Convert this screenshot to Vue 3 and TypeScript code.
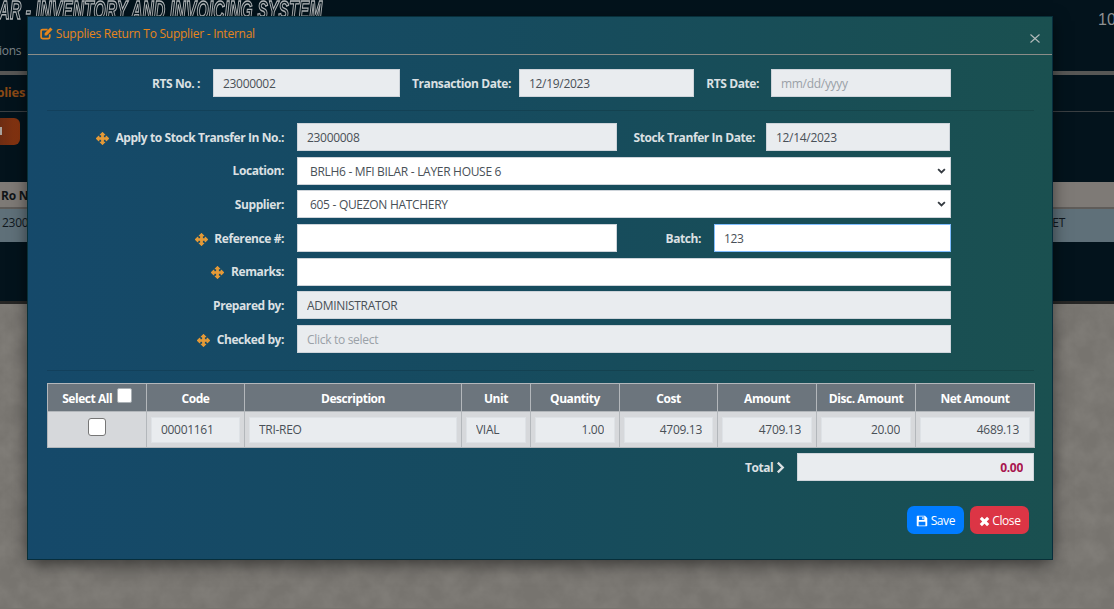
<template>
  <div class="page">
    <!-- dimmed page behind the modal -->
    <div class="backdrop">
      <header class="topbar">
        <div class="brand-wrap">
          <div class="brand">MFI BILAR - INVENTORY AND INVOICING SYSTEM</div>
          <div class="nav-text">Transactions</div>
        </div>
        <div class="top-right">10</div>
      </header>
      <div class="panel">
        <div class="panel-title">Supplies</div>
        <div class="panel-tools"><span class="add-btn"><i></i></span></div>
        <div class="bg-head"><span>Ro No</span></div>
        <div class="bg-row"><span>23000002</span><span class="bg-end">ET</span></div>
      </div>
      <div class="wall">
        <svg class="wall-tex" width="1114" height="304" aria-hidden="true">
          <filter id="grain">
            <feTurbulence type="fractalNoise" baseFrequency="0.05" numOctaves="4" seed="7" />
            <feColorMatrix type="matrix" values="0 0 0 0 0.62  0 0 0 0 0.6  0 0 0 0 0.56  0.2 0 0 0 -0.06" />
          </filter>
          <rect width="1114" height="304" filter="url(#grain)" />
        </svg>
      </div>
    </div>

    <section class="modal">
      <div class="modal-head">
        <h5 class="modal-title">
          <svg class="ico-edit" viewBox="0 0 24 24" width="13" height="13">
            <path d="M18 13.500v5a3 3 0 0 1-3 3H5a3 3 0 0 1-3-3V8a3 3 0 0 1 3-3h9" fill="none" stroke="currentColor" stroke-width="3.2" />
            <path d="M8.500 11.500 19.200.8l4 4L12.500 15.500h-4z" fill="currentColor" />
          </svg>
          Supplies Return To Supplier - Internal
        </h5>
        <button class="x-btn" type="button">
          <svg viewBox="0 0 10 9" width="10" height="9"><path d="M.5.5l9 8M9.500.5l-9 8" /></svg>
        </button>
      </div>

      <div class="modal-body">
        <div class="top-row">
          <label class="lbl rts-l">RTS No. :</label>
          <input class="ctl rts-i" readonly value="23000002" />
          <label class="lbl tx-l">Transaction Date:</label>
          <input class="ctl tx-i" readonly value="12/19/2023" />
          <label class="lbl dt-l">RTS Date:</label>
          <input class="ctl dt-i" readonly placeholder="mm/dd/yyyy" />
        </div>

        <hr class="sep" />

        <div class="form">
          <div class="row">
            <label class="lbl main-l">
              <svg class="ico-move" viewBox="0 0 24 24"><path :d="movePath" /></svg>
              Apply to Stock Transfer In No.:
            </label>
            <input class="ctl half" readonly value="23000008" />
            <label class="lbl stock-l">Stock Tranfer In Date:</label>
            <input class="ctl stock-i" readonly value="12/14/2023" />
          </div>
          <div class="row">
            <label class="lbl main-l">Location:</label>
            <div class="sel-wrap">
              <select class="ctl sel">
                <option>BRLH6 - MFI BILAR - LAYER HOUSE 6</option>
              </select>
              <svg class="sel-arrow" viewBox="0 0 12 8"><path d="M1.500 1.500 6 6l4.500-4.500" /></svg>
            </div>
          </div>
          <div class="row">
            <label class="lbl main-l">Supplier:</label>
            <div class="sel-wrap">
              <select class="ctl sel">
                <option>605 - QUEZON HATCHERY</option>
              </select>
              <svg class="sel-arrow" viewBox="0 0 12 8"><path d="M1.500 1.500 6 6l4.500-4.500" /></svg>
            </div>
          </div>
          <div class="row">
            <label class="lbl main-l">
              <svg class="ico-move" viewBox="0 0 24 24"><path :d="movePath" /></svg>
              Reference #:
            </label>
            <input class="ctl half white" />
            <label class="lbl batch-l">Batch:</label>
            <input class="ctl batch-i" value="123" />
          </div>
          <div class="row">
            <label class="lbl main-l">
              <svg class="ico-move" viewBox="0 0 24 24"><path :d="movePath" /></svg>
              Remarks:
            </label>
            <input class="ctl full white" />
          </div>
          <div class="row">
            <label class="lbl main-l">Prepared by:</label>
            <input class="ctl full" readonly value="ADMINISTRATOR" />
          </div>
          <div class="row">
            <label class="lbl main-l">
              <svg class="ico-move" viewBox="0 0 24 24"><path :d="movePath" /></svg>
              Checked by:
            </label>
            <input class="ctl full" readonly placeholder="Click to select" />
          </div>
        </div>

        <hr class="sep sep2" />

        <table class="items">
          <colgroup>
            <col v-for="w in colWidths" :key="w.key" :style="{ width: w.px + 'px' }" />
          </colgroup>
          <thead>
            <tr>
              <th class="sel-all">Select All <input type="checkbox" class="chk chk-sm" /></th>
              <th v-for="h in headers" :key="h">{{ h }}</th>
            </tr>
          </thead>
          <tbody>
            <tr>
              <td class="chk-cell"><input type="checkbox" class="chk" /></td>
              <td><input class="ctl cell" readonly value="00001161" /></td>
              <td><input class="ctl cell" readonly value="TRI-REO" /></td>
              <td><input class="ctl cell" readonly value="VIAL" /></td>
              <td v-for="(n, i) in numbers" :key="i"><input class="ctl cell num" readonly :value="n" /></td>
            </tr>
          </tbody>
        </table>

        <div class="total-row">
          <span class="total-l">
            Total
            <svg viewBox="0 0 10 14" width="9" height="13"><path d="M2 1.500 7.500 7 2 12.500" /></svg>
          </span>
          <input class="ctl total-i" readonly value="0.00" />
        </div>

        <div class="actions">
          <button class="btn save" type="button">
            <svg viewBox="0 0 16 16" width="12" height="12">
              <path fill-rule="evenodd" d="M2 1h10l3 3v10a1 1 0 0 1-1 1H2a1 1 0 0 1-1-1V2a1 1 0 0 1 1-1zm2 1v4.500h7V2zm4.500.6h1.600v3.200H8.500zM3.500 9v5h9V9z" fill="currentColor" />
            </svg>
            Save
          </button>
          <button class="btn close" type="button">
            <svg viewBox="0 0 12 12" width="11" height="11"><path d="M2 2l8 8M10 2l-8 8" /></svg>
            Close
          </button>
        </div>
      </div>
    </section>
  </div>
</template>

<script setup lang="ts">
const movePath =
  'M12 1l4.200 4.200h-2.700v5.300h5.300V7.800L23 12l-4.200 4.200v-2.700h-5.300v5.300h2.700L12 23l-4.200-4.200h2.700v-5.300H5.200v2.700L1 12l4.200-4.200v2.700h5.300V5.200H7.800z'

const headers: string[] = ['Code', 'Description', 'Unit', 'Quantity', 'Cost', 'Amount', 'Disc. Amount', 'Net Amount']
const numbers: string[] = ['1.00', '4709.13', '4709.13', '20.00', '4689.13']
const colWidths = [99, 98, 217, 69, 89, 98, 99, 99, 119].map((px, key) => ({ px, key }))
</script>

<style scoped>
.page {
  position: relative;
  width: 1114px;
  height: 609px;
  overflow: hidden;
  font-family: "Open Sans", "Noto Sans", sans-serif;
  font-size: 12px;
  letter-spacing: -0.25px;
}

/* background page */
.backdrop {
  height: 609px;
  display: flex;
  flex-direction: column;
  background: #77746f;
}

.topbar {
  height: 71px;
  flex: none;
  display: flex;
  justify-content: space-between;
  background: #03131c;
  border-bottom: 4px solid #575755;
  box-sizing: content-box;
  overflow: hidden;
}

.brand-wrap {
  white-space: nowrap;
}

.brand {
  height: 43px;
  margin-top: -4px;
  margin-left: -59px;
  font-family: "Liberation Sans", sans-serif;
  font-size: 25px;
  font-weight: 700;
  font-style: italic;
  letter-spacing: 0.35px;
  color: #0a1a22;
  -webkit-text-stroke: 1.4px #b4b8ba;
  transform: scaleX(0.62);
  transform-origin: 0 0;
}

.nav-text {
  margin-left: -47px;
  margin-top: 3px;
  color: #7e8589;
  font-size: 12px;
}

.top-right {
  width: 16px;
  padding-top: 11px;
  font-family: "Liberation Sans", sans-serif;
  font-size: 16px;
  letter-spacing: 0;
  color: #8d9092;
  white-space: nowrap;
}

.panel {
  height: 229px;
  flex: none;
  display: flex;
  flex-direction: column;
  background: #03131c;
  border-bottom: 3px solid #262625;
  box-sizing: border-box;
  overflow: hidden;
}

.panel-title {
  height: 36px;
  flex: none;
  margin: 0 -27px;
  line-height: 35px;
  font-size: 13px;
  font-weight: 700;
  color: #8a4a16;
  border-bottom: 1px solid #3a3f42;
}

.panel-tools {
  height: 70px;
  flex: none;
  padding-top: 6px;
  box-sizing: border-box;
}

.add-btn {
  display: block;
  width: 20px;
  height: 27px;
  background: linear-gradient(90deg, #6d2c12, #8a3510);
  border-radius: 0 6px 6px 0;
  position: relative;
}

.add-btn i {
  position: absolute;
  left: 0;
  top: 9px;
  width: 2px;
  height: 8px;
  background: #a9a29c;
}

.bg-head {
  height: 27px;
  flex: none;
  box-sizing: border-box;
  background: #7e7a76;
  border-bottom: 2px solid #5f5c59;
  padding-left: 1px;
  line-height: 27px;
  font-weight: 700;
  color: #101518;
  white-space: nowrap;
}

.bg-row {
  height: 33px;
  flex: none;
  display: flex;
  justify-content: space-between;
  background: #5f7079;
  padding: 0 49px 0 2px;
  line-height: 27px;
  color: #10181e;
}

.wall {
  flex: 1;
  overflow: hidden;
}

.wall-tex {
  display: block;
}

/* modal */
.modal {
  position: absolute;
  left: 27px;
  top: 16px;
  width: 1026px;
  height: 544px;
  box-sizing: border-box;
  border: 1px solid rgba(4, 40, 50, 0.8);
  background: linear-gradient(90deg, #15496a 0%, #164b5f 45%, #1a5050 100%);
  box-shadow: 0 5px 15px rgba(0, 0, 0, 0.5);
}

.modal-head {
  height: 38px;
  box-sizing: border-box;
  display: flex;
  justify-content: space-between;
  border-bottom: 1px solid #8c8d88;
  padding: 0 12px;
}

.modal-title {
  margin: 0;
  font-size: 12px;
  font-weight: 400;
  line-height: 33px;
  color: #e8851a;
}

.ico-edit {
  vertical-align: -2px;
}

.x-btn {
  border: 0;
  padding: 12px 0 0;
  height: 30px;
  background: none;
}

.x-btn svg {
  display: block;
  fill: none;
  stroke: #b5bcbc;
  stroke-width: 1.1;
}

.modal-body {
  padding: 14px 18px 0 19px;
}

.lbl {
  flex: none;
  font-weight: 700;
  letter-spacing: -0.42px;
  color: #dbe0e3;
  text-align: right;
  white-space: nowrap;
}

.ctl {
  box-sizing: border-box;
  height: 28px;
  border: 1px solid #ced4da;
  border-radius: 0;
  outline: 0;
  padding: 0 9px;
  background: #e9ecef;
  color: #495057;
  font: inherit;
  letter-spacing: -0.3px;
}

.ctl::placeholder {
  color: #9aa1a7;
}

.white {
  background: #fff;
}

.top-row {
  display: flex;
  align-items: center;
}

.rts-l { width: 153px; margin-right: 13px; }
.rts-i { width: 187px; margin-right: 12px; }
.tx-l { width: 95px; margin-right: 12px; }
.tx-i { width: 175px; margin-right: 12px; }
.dt-l { width: 53px; margin-right: 12px; }
.dt-i { width: 180px; }

.sep {
  margin: 13px 0 12px;
  border: 0;
  border-top: 1px solid rgba(0, 0, 0, 0.12);
}

.sep2 {
  margin: 17px 0 12px;
}

.form {
  display: flex;
  flex-direction: column;
  gap: 5.7px;
}

.row {
  display: flex;
  align-items: center;
}

.main-l {
  width: 237px;
  margin-right: 13px;
}

.ico-move {
  width: 13px;
  height: 13px;
  margin-right: 4px;
  vertical-align: -3px;
  fill: #e59a37;
  stroke: #e59a37;
  stroke-width: 2;
  stroke-linejoin: round;
}

.half { width: 320px; }
.stock-l { width: 138px; }
.stock-i { width: 184px; margin-left: 11px; }
.batch-l { width: 84px; }
.batch-i {
  width: 237px;
  margin-left: 13px;
  background: #fff;
  border-color: #80bdff;
}
.full { width: 654px; }

.sel-wrap {
  position: relative;
  width: 654px;
}

.sel {
  display: block;
  width: 100%;
  padding: 1px 12px 0;
  background: #fff;
  appearance: none;
  -webkit-appearance: none;
}

.sel-arrow {
  position: absolute;
  right: 5px;
  top: 11px;
  width: 9px;
  height: 6px;
  fill: none;
  stroke: #343a40;
  stroke-width: 2.4;
}

.items {
  width: 987px;
  table-layout: fixed;
  border-collapse: collapse;
}

.items th {
  height: 28px;
  padding: 1px 0 0;
  box-sizing: border-box;
  background: #6c757d;
  border: 1px solid #b3b7bb;
  color: #fff;
  font-weight: 700;
  letter-spacing: -0.45px;
  text-align: center;
  white-space: nowrap;
}

.items td {
  height: 36px;
  padding: 4px;
  box-sizing: border-box;
  background: #d6d8db;
  border: 1px solid #b3b7bb;
}

.items .chk-cell {
  vertical-align: top;
}

.chk {
  appearance: none;
  -webkit-appearance: none;
  display: block;
  width: 18px;
  height: 18px;
  margin: 2px auto 0;
  background: #fff;
  border: 1px solid #767676;
  border-radius: 3px;
}

.chk-sm {
  display: inline-block;
  width: 15px;
  height: 15px;
  border-color: #aab0b5;
  border-radius: 2px;
  margin: 0 0 0 2px;
  vertical-align: 0;
}

.items .sel-all {
  padding: 0 0 2px;
  line-height: 15px;
}

.cell {
  display: block;
  width: 100%;
  height: 26px;
  border-color: #dee2e6;
}

.num {
  text-align: right;
  padding-right: 10px;
}

.total-row {
  display: flex;
  justify-content: flex-end;
  align-items: center;
  margin-top: 5px;
}

.total-l {
  margin-right: 12px;
  font-weight: 700;
  letter-spacing: -0.42px;
  color: #dbe0e3;
}

.total-l svg {
  vertical-align: -2px;
  fill: none;
  stroke: #dbe0e3;
  stroke-width: 2.6;
}

.total-i {
  width: 237px;
  padding: 1px 10px 0 9px;
  text-align: right;
  font-weight: 700;
  color: #a8174f;
}

.actions {
  display: flex;
  justify-content: flex-end;
  gap: 6px;
  margin-top: 25px;
  padding-right: 5px;
}

.btn {
  height: 28px;
  border: 0;
  border-radius: 7px;
  padding: 0;
  color: #fff;
  font: inherit;
  letter-spacing: -0.4px;
}

.btn svg {
  vertical-align: -2px;
}

.save {
  width: 57px;
  background: #007bff;
}

.close {
  width: 59px;
  background: #dc3545;
}

.close svg {
  fill: none;
  stroke: #fff;
  stroke-width: 3.4;
}
</style>

<style>
html,
body {
  margin: 0;
  overflow: hidden;
}
</style>
